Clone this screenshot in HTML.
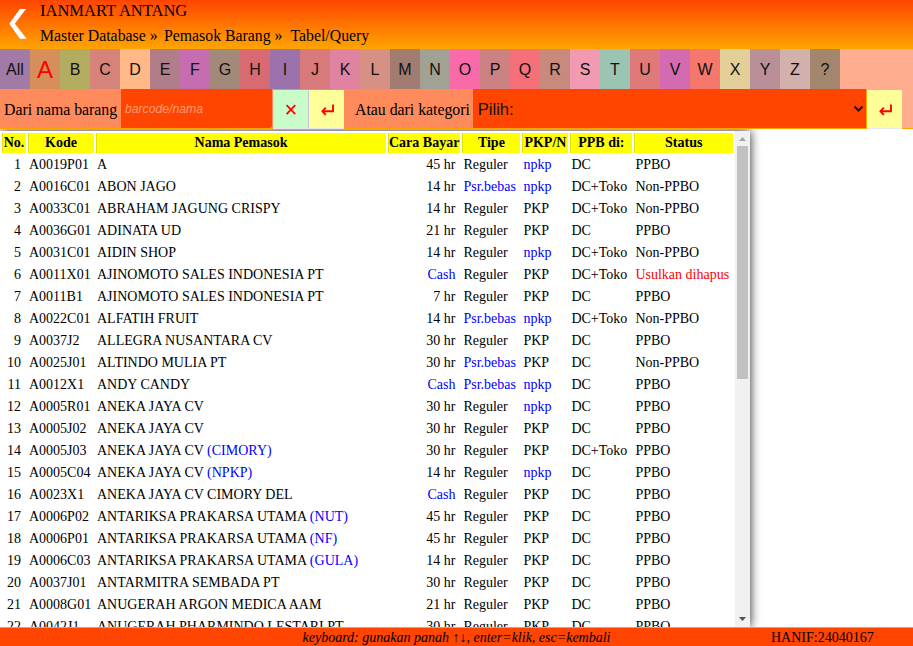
<!DOCTYPE html>
<html><head><meta charset="utf-8">
<style>
html,body{margin:0;padding:0;}
body{width:913px;height:646px;overflow:hidden;position:relative;background:#fff;font-family:"Liberation Serif",serif;}
#hdr{position:absolute;left:0;top:0;width:913px;height:49px;background:linear-gradient(#ff4500,#ffa500);}
#back{position:absolute;left:0;top:0;}
#t1{position:absolute;left:40px;top:1px;font-size:16.5px;line-height:20px;white-space:nowrap;}
#t2{position:absolute;left:40px;top:26px;font-size:15.8px;line-height:20px;white-space:nowrap;}
#bar{position:absolute;left:0;top:49px;width:913px;height:80px;background:#ffac8f;}
.lt{float:left;width:30px;height:40px;line-height:42px;text-align:center;font-family:"Liberation Sans",sans-serif;font-size:16px;color:#111;}
.lt.sel{color:#f00;font-size:24px;}
#srow{position:absolute;left:0;top:40px;width:473px;height:39px;background:#ff8a5c;}
#srow2{position:absolute;left:866px;top:40px;width:47px;height:39px;border-bottom:1px solid #ffa000;}
#lbl1{position:absolute;left:4px;top:0.5px;line-height:39px;font-size:15.8px;}
#inp{position:absolute;left:121px;top:0;width:151px;height:39px;background:#ff4500;border-radius:0 0 3px 0;box-sizing:border-box;border-left:1px solid #b86418;border-top:1px solid #b86418;}
#inp span{position:absolute;left:3px;top:0;line-height:39px;font-family:"Liberation Sans",sans-serif;font-style:italic;font-size:12.2px;color:#ff9d78;}
.btn{position:absolute;top:1px;height:38px;border-bottom:1px solid #ece6f0;z-index:2;}
.btn svg{position:absolute;left:0;top:0.5px;}
#bx{left:273px;width:35px;background:#c8fcc8;border-right:1px solid #c8c4d8;}
#be{left:309px;width:35px;background:#ffff99;}
#lbl2{position:absolute;left:355px;top:0.5px;line-height:39px;font-size:15.8px;}
#sel{position:absolute;left:473px;top:40px;width:394px;height:39px;background:#ff4500;box-sizing:border-box;border-left:1px solid #b06818;border-right:1px solid #ffa500;}
#sel span{position:absolute;left:3.7px;top:0.5px;line-height:39px;font-family:"Liberation Sans",sans-serif;font-size:16.6px;color:#111;}
#be2{left:867px;top:41px;width:35px;background:#ffff99;}
#wrap{position:absolute;left:0;top:131px;width:750px;height:496px;overflow:hidden;background:#fff;box-shadow:0 0 10px #222;}
table{border-spacing:2px;width:735px;font-size:14px;}
th{background:#ff0;height:20px;padding:0 1px;font-weight:bold;white-space:nowrap;box-shadow:inset 1px 0 #e2e200;}
td{padding:0 1px;height:20px;white-space:nowrap;}
td.r{text-align:right;padding-right:5px;}
.bl{color:#00f;font-weight:normal;}
.cash{color:#00f;}
.rd{color:#f00;}
#sb{position:absolute;left:735px;top:131px;width:15px;height:496px;background:#f1f1f1;}
#thumb{position:absolute;left:2px;top:15px;width:11px;height:233px;background:#c1c1c1;}
#ftr{position:absolute;left:0;top:627px;width:913px;height:19px;background:#ff4500;border-top:1px solid #ffa500;box-sizing:border-box;}
#fk{position:absolute;left:0;width:913px;text-align:center;top:1px;line-height:18px;font-size:14px;font-style:italic;}
#fh{position:absolute;left:771px;top:1px;line-height:18px;font-size:14px;}
</style></head><body>
<div id="hdr">
<svg id="back" width="40" height="49"><polygon points="19.9,9.1 26,9.1 14.9,23.8 26.6,38.8 19.9,38.8 9.3,23.8" fill="#fff"/></svg>
<div id="t1">IANMART ANTANG</div>
<div id="t2"><span style="position:absolute;left:0">Master Database »</span><span style="position:absolute;left:124px">Pemasok Barang »</span><span style="position:absolute;left:250.5px">Tabel/Query</span></div>
</div>
<div id="wrap"><table>
<tr><th style="width:22px">No.</th><th style="width:64px">Kode</th><th style="width:288px">Nama Pemasok</th><th style="width:70px">Cara Bayar</th><th style="width:56px">Tipe</th><th style="width:44px">PKP/N</th><th style="width:60px">PPB di:</th><th>Status</th></tr>
<tr><td class="r">1</td><td>A0019P01</td><td>A</td><td class="r">45 hr</td><td>Reguler</td><td><span class="bl">npkp</span></td><td>DC</td><td>PPBO</td></tr><tr><td class="r">2</td><td>A0016C01</td><td>ABON JAGO</td><td class="r">14 hr</td><td><span class="bl">Psr.bebas</span></td><td><span class="bl">npkp</span></td><td>DC+Toko</td><td>Non-PPBO</td></tr><tr><td class="r">3</td><td>A0033C01</td><td>ABRAHAM JAGUNG CRISPY</td><td class="r">14 hr</td><td>Reguler</td><td>PKP</td><td>DC+Toko</td><td>Non-PPBO</td></tr><tr><td class="r">4</td><td>A0036G01</td><td>ADINATA UD</td><td class="r">21 hr</td><td>Reguler</td><td>PKP</td><td>DC</td><td>PPBO</td></tr><tr><td class="r">5</td><td>A0031C01</td><td>AIDIN SHOP</td><td class="r">14 hr</td><td>Reguler</td><td><span class="bl">npkp</span></td><td>DC+Toko</td><td>Non-PPBO</td></tr><tr><td class="r">6</td><td>A0011X01</td><td>AJINOMOTO SALES INDONESIA PT</td><td class="r"><span class="cash">Cash</span></td><td>Reguler</td><td>PKP</td><td>DC+Toko</td><td><span class="rd">Usulkan dihapus</span></td></tr><tr><td class="r">7</td><td>A0011B1</td><td>AJINOMOTO SALES INDONESIA PT</td><td class="r">7 hr</td><td>Reguler</td><td>PKP</td><td>DC</td><td>PPBO</td></tr><tr><td class="r">8</td><td>A0022C01</td><td>ALFATIH FRUIT</td><td class="r">14 hr</td><td><span class="bl">Psr.bebas</span></td><td><span class="bl">npkp</span></td><td>DC+Toko</td><td>Non-PPBO</td></tr><tr><td class="r">9</td><td>A0037J2</td><td>ALLEGRA NUSANTARA CV</td><td class="r">30 hr</td><td>Reguler</td><td>PKP</td><td>DC</td><td>PPBO</td></tr><tr><td class="r">10</td><td>A0025J01</td><td>ALTINDO MULIA PT</td><td class="r">30 hr</td><td><span class="bl">Psr.bebas</span></td><td>PKP</td><td>DC</td><td>Non-PPBO</td></tr><tr><td class="r">11</td><td>A0012X1</td><td>ANDY CANDY</td><td class="r"><span class="cash">Cash</span></td><td><span class="bl">Psr.bebas</span></td><td><span class="bl">npkp</span></td><td>DC</td><td>PPBO</td></tr><tr><td class="r">12</td><td>A0005R01</td><td>ANEKA JAYA CV</td><td class="r">30 hr</td><td>Reguler</td><td><span class="bl">npkp</span></td><td>DC</td><td>PPBO</td></tr><tr><td class="r">13</td><td>A0005J02</td><td>ANEKA JAYA CV</td><td class="r">30 hr</td><td>Reguler</td><td>PKP</td><td>DC</td><td>PPBO</td></tr><tr><td class="r">14</td><td>A0005J03</td><td>ANEKA JAYA CV <b class="bl">(CIMORY)</b></td><td class="r">30 hr</td><td>Reguler</td><td>PKP</td><td>DC+Toko</td><td>PPBO</td></tr><tr><td class="r">15</td><td>A0005C04</td><td>ANEKA JAYA CV <b class="bl">(NPKP)</b></td><td class="r">14 hr</td><td>Reguler</td><td><span class="bl">npkp</span></td><td>DC</td><td>PPBO</td></tr><tr><td class="r">16</td><td>A0023X1</td><td>ANEKA JAYA CV CIMORY DEL</td><td class="r"><span class="cash">Cash</span></td><td>Reguler</td><td>PKP</td><td>DC</td><td>PPBO</td></tr><tr><td class="r">17</td><td>A0006P02</td><td>ANTARIKSA PRAKARSA UTAMA <b class="bl">(NUT)</b></td><td class="r">45 hr</td><td>Reguler</td><td>PKP</td><td>DC</td><td>PPBO</td></tr><tr><td class="r">18</td><td>A0006P01</td><td>ANTARIKSA PRAKARSA UTAMA <b class="bl">(NF)</b></td><td class="r">45 hr</td><td>Reguler</td><td>PKP</td><td>DC</td><td>PPBO</td></tr><tr><td class="r">19</td><td>A0006C03</td><td>ANTARIKSA PRAKARSA UTAMA <b class="bl">(GULA)</b></td><td class="r">14 hr</td><td>Reguler</td><td>PKP</td><td>DC</td><td>PPBO</td></tr><tr><td class="r">20</td><td>A0037J01</td><td>ANTARMITRA SEMBADA PT</td><td class="r">30 hr</td><td>Reguler</td><td>PKP</td><td>DC</td><td>PPBO</td></tr><tr><td class="r">21</td><td>A0008G01</td><td>ANUGERAH ARGON MEDICA AAM</td><td class="r">21 hr</td><td>Reguler</td><td>PKP</td><td>DC</td><td>PPBO</td></tr><tr><td class="r">22</td><td>A0042J1</td><td>ANUGERAH PHARMINDO LESTARI PT</td><td class="r">30 hr</td><td>Reguler</td><td>PKP</td><td>DC</td><td>PPBO</td></tr><tr><td class="r">23</td><td>A0043J1</td><td>ANUGERAH SEJAHTERA</td><td class="r">30 hr</td><td>Reguler</td><td>PKP</td><td>DC</td><td>PPBO</td></tr>
</table></div>
<div id="sb"><svg width="15" height="496" style="position:absolute;left:0;top:0"><polygon points="4,10 11,10 7.5,6" fill="#a3a3a3"/><polygon points="4,486 11,486 7.5,490" fill="#505050"/></svg><div id="thumb"></div></div>
<div id="bar"><div class="lt" style="background:#a27aa6">All</div><div class="lt sel" style="background:#d68f5a">A</div><div class="lt" style="background:#b2ad5e">B</div><div class="lt" style="background:#d6837a">C</div><div class="lt" style="background:#ffb886">D</div><div class="lt" style="background:#b07d88">E</div><div class="lt" style="background:#c66cb0">F</div><div class="lt" style="background:#a2897a">G</div><div class="lt" style="background:#d86a72">H</div><div class="lt" style="background:#9c72ac">I</div><div class="lt" style="background:#d87a7c">J</div><div class="lt" style="background:#e082a2">K</div><div class="lt" style="background:#d69084">L</div><div class="lt" style="background:#a27c70">M</div><div class="lt" style="background:#a2a294">N</div><div class="lt" style="background:#f86aa8">O</div><div class="lt" style="background:#cc8282">P</div><div class="lt" style="background:#f6707a">Q</div><div class="lt" style="background:#c88a7c">R</div><div class="lt" style="background:#f29ab2">S</div><div class="lt" style="background:#9cc4b2">T</div><div class="lt" style="background:#e07a7a">U</div><div class="lt" style="background:#d46ab0">V</div><div class="lt" style="background:#f6786c">W</div><div class="lt" style="background:#e2d098">X</div><div class="lt" style="background:#b99098">Y</div><div class="lt" style="background:#d2b0ac">Z</div><div class="lt" style="background:#a2876e">?</div>
<div id="srow"><div id="lbl1">Dari nama barang</div><div id="inp"><span>barcode/nama</span></div>
<div class="btn" id="bx"><svg width="35" height="39"><path d="M13.6,14.2 L22.2,23.2 M22.2,14.2 L13.6,23.2" stroke="#f00" stroke-width="1.7"/></svg></div><div class="btn" id="be"><svg width="35" height="39"><path d="M24,13.5 V20.2 H13.6 M16.8,16.6 L13.4,20.2 L16.8,23.8" stroke="#f00" stroke-width="1.9" fill="none"/></svg></div><div id="lbl2">Atau dari kategori</div></div>
<div id="oline" style="position:absolute;left:0;top:79px;width:913px;height:1px;background:#ffa500"></div>
<div id="sel"><span>Pilih:</span><svg width="20" height="39" style="position:absolute;left:376px;top:0"><path d="M4.5,17.5 L8.5,21.5 L12.5,17.5" stroke="#111" stroke-width="2" fill="none"/></svg></div>
<div class="btn" id="be2"><svg width="35" height="39"><path d="M24,13.5 V20.2 H13.6 M16.8,16.6 L13.4,20.2 L16.8,23.8" stroke="#f00" stroke-width="1.9" fill="none"/></svg></div>
</div>
<div id="ftr"><div id="fk">keyboard: gunakan panah ↑↓, enter=klik, esc=kembali</div><div id="fh">HANIF:24040167</div></div>
</body></html>
